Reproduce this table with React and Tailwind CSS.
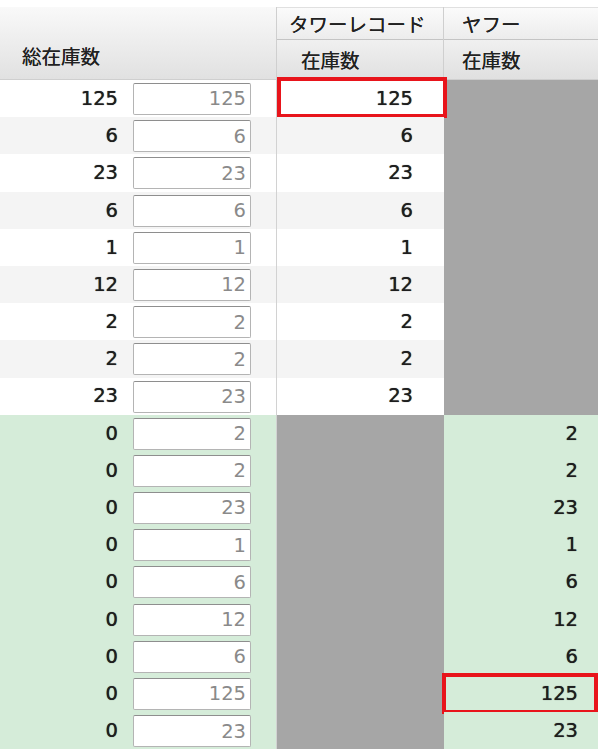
import React from 'react'

const whiteRows = [125, 6, 23, 6, 1, 12, 2, 2, 23]
const greenRows = [2, 2, 23, 1, 6, 12, 6, 125, 23]

const num = "font-['DejaVu_Sans',Verdana,sans-serif] text-[19.5px] [text-shadow:0_0_0.7px_currentColor]"
const jp = "font-['Noto_Sans_CJK_JP',sans-serif] text-[19.5px] text-[#222] [text-shadow:0_0_0.5px_#222]"

const StockInput = ({ value }) => (
  <div className='mt-[3px] ml-[8px] w-[118px] h-[32px] bg-white border border-[#b4b4b4] border-t-[#8e8e8e] rounded-[2px] flex items-center justify-end pr-[4px] text-[#8a8a8a] [text-shadow:none]'>
    {value}
  </div>
)

const Row = ({ total, input, tower, yahoo, stripe, green, redTower, redYahoo }) => {
  const leftBg = green ? 'bg-[#d5ecd9]' : stripe ? 'bg-[#f4f4f4]' : 'bg-white'
  return (
    <div className={`flex h-[37.2px] ${num}`}>
      <div className={`flex w-[277px] border-r border-[#d2d2d2] ${leftBg}`}>
        <div className='w-[125px] flex items-center justify-end pr-[7px] text-[#1e1e1e]'>{total}</div>
        <StockInput value={input} />
      </div>
      {green ? (
        <div className='w-[167px] bg-[#a6a6a6]' />
      ) : (
        <div className={`relative w-[167px] flex items-center justify-end pr-[31px] text-[#1e1e1e] ${leftBg}`}>
          {tower}
          {redTower && <div className='absolute left-0 -top-[3px] w-[170px] h-[41px] border-[4px] border-[#e8141b]' />}
        </div>
      )}
      {green ? (
        <div className='relative flex-1 flex items-center justify-end pr-[20px] text-[#1e1e1e] bg-[#d5ecd9]'>
          {yahoo}
          {redYahoo && <div className='absolute -left-[2px] -top-[2px] right-0 h-[41px] border-[4px] border-[#e8141b]' />}
        </div>
      ) : (
        <div className='flex-1 bg-[#a6a6a6]' />
      )}
    </div>
  )
}

const Header = () => (
  <div className='flex h-[80px] pt-[7px] bg-white'>
    <div className='w-[277px] flex items-end pb-[9px] pl-[22px] bg-gradient-to-b from-[#f9f9f9] to-[#e1e1e1] border-r border-b border-[#cfcfcf]'>
      <span className={jp}>総在庫数</span>
    </div>
    <div className='w-[167px] flex flex-col border-r border-[#cfcfcf]'>
      <div className='h-[33px] flex items-center pl-[12px] bg-gradient-to-b from-[#fbfbfb] to-[#ececec] border-b border-[#c4c4c4] border-t border-t-[#e0e0e0]'>
        <span className={jp}>タワーレコード</span>
      </div>
      <div className='flex-1 flex items-center pl-[24px] bg-gradient-to-b from-[#f0f0f0] to-[#e0e0e0] border-b border-[#cfcfcf]'>
        <span className={jp}>在庫数</span>
      </div>
    </div>
    <div className='flex-1 flex flex-col'>
      <div className='h-[33px] flex items-center pl-[18px] bg-gradient-to-b from-[#fbfbfb] to-[#ececec] border-b border-[#c4c4c4] border-t border-t-[#e0e0e0]'>
        <span className={jp}>ヤフー</span>
      </div>
      <div className='flex-1 flex items-center pl-[18px] bg-gradient-to-b from-[#f0f0f0] to-[#e0e0e0] border-b border-[#cfcfcf]'>
        <span className={jp}>在庫数</span>
      </div>
    </div>
  </div>
)

export default function App() {
  return (
    <div className='w-[598px] h-[753px] bg-white overflow-hidden'>
      <Header />
      {whiteRows.map((v, i) => (
        <Row key={'w' + i} total={v} input={v} tower={v} stripe={i % 2 === 1} redTower={i === 0} />
      ))}
      {greenRows.map((v, i) => (
        <Row key={'g' + i} total={0} input={v} yahoo={v} green redYahoo={i === 7} />
      ))}
    </div>
  )
}
